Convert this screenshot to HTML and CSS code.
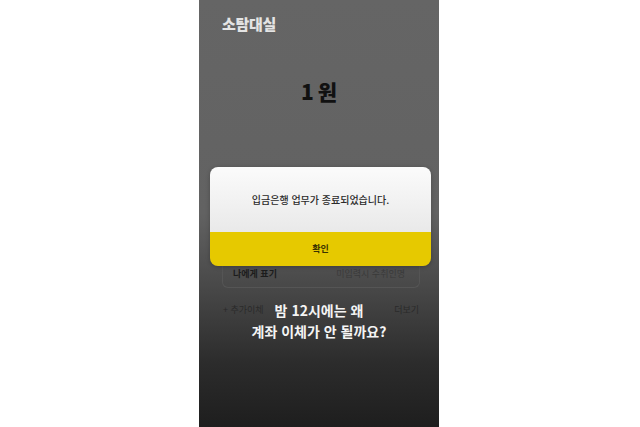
FILE: index.html
```html
<!DOCTYPE html>
<html lang="ko">
<head>
  <meta charset="UTF-8" />
  <meta name="viewport" content="width=device-width, initial-scale=1.0"/>
  <title>소탐대실</title>
  <link rel="stylesheet" href="styles.css">
</head>
<body>

  <div class="phone">
    <div class="title">소탐대실</div>
    <div class="amount">1 원</div>

    <!-- background form, dimmed -->
    <div class="memo-box">
      <span class="memo-label">나에게 표기</span>
      <span class="memo-hint">미입력시 수취인명</span>
    </div>
    <div class="more-row">
      <span>+ 추가이체</span>
      <span>더보기</span>
    </div>

    <!-- caption -->
    <div class="caption">밤 12시에는 왜<br>계좌 이체가 안 될까요?</div>

    <!-- alert -->
    <div class="dialog">
      <div class="dialog-msg">입금은행 업무가 종료되었습니다.</div>
      <div class="dialog-btn">확인</div>
    </div>
  </div>

</body>
</html>
```

FILE: styles.css
```css
body {
  margin: 0;
  background-color: #fff;
  font-family: 'Noto Sans CJK KR', 'Noto Sans', sans-serif;
}
.phone {
  position: relative;
  width: 240px;
  height: 427px;
  margin-left: 199px;
  background: linear-gradient(#656565 0%, #626262 50%, #474747 68%, #2c2c2c 85%, #1e1e1e 100%);
  overflow: hidden;
}
.title {
  padding: 13px 0 0 23px;
  font-size: 15px;
  font-weight: 900;
  color: #e4e4e4;
  letter-spacing: -0.3px;
}
.amount {
  margin-top: 42px;
  text-align: center;
  font-size: 21px;
  font-weight: 900;
  color: #111;
  word-spacing: -2px;
}
.memo-box {
  display: flex;
  justify-content: space-between;
  margin: 159px 19px 0 23px;
  padding: 2px 14px 7px 10px;
  border: 1px solid #555;
  border-top: none;
  border-radius: 0 0 6px 6px;
  font-size: 9px;
}
.memo-label {
  color: #1c1c1c;
  font-weight: 700;
}
.memo-hint {
  color: #3a3a3a;
}
.more-row {
  display: flex;
  justify-content: space-between;
  margin: 15px 20px 0 24px;
  font-size: 9px;
  color: #2a2a2a;
}
.caption {
  position: absolute;
  top: 300px;
  left: 0;
  right: 0;
  text-align: center;
  font-size: 14px;
  font-weight: 700;
  line-height: 21px;
  color: #f4f4f4;
}
.dialog {
  position: absolute;
  top: 167px;
  left: 11px;
  width: 221px;
  border-radius: 8px;
  overflow: hidden;
  box-shadow: 0 1px 4px rgba(0,0,0,0.25);
}
.dialog-msg {
  height: 65px;
  line-height: 65px;
  text-align: center;
  font-size: 10px;
  font-weight: 500;
  color: #2a2a2a;
  background: linear-gradient(#fbfbfb, #e9e9e9);
}
.dialog-btn {
  height: 34px;
  line-height: 33px;
  text-align: center;
  font-size: 9px;
  font-weight: 700;
  color: #3a3200;
  background-color: #e6c900;
}
```
